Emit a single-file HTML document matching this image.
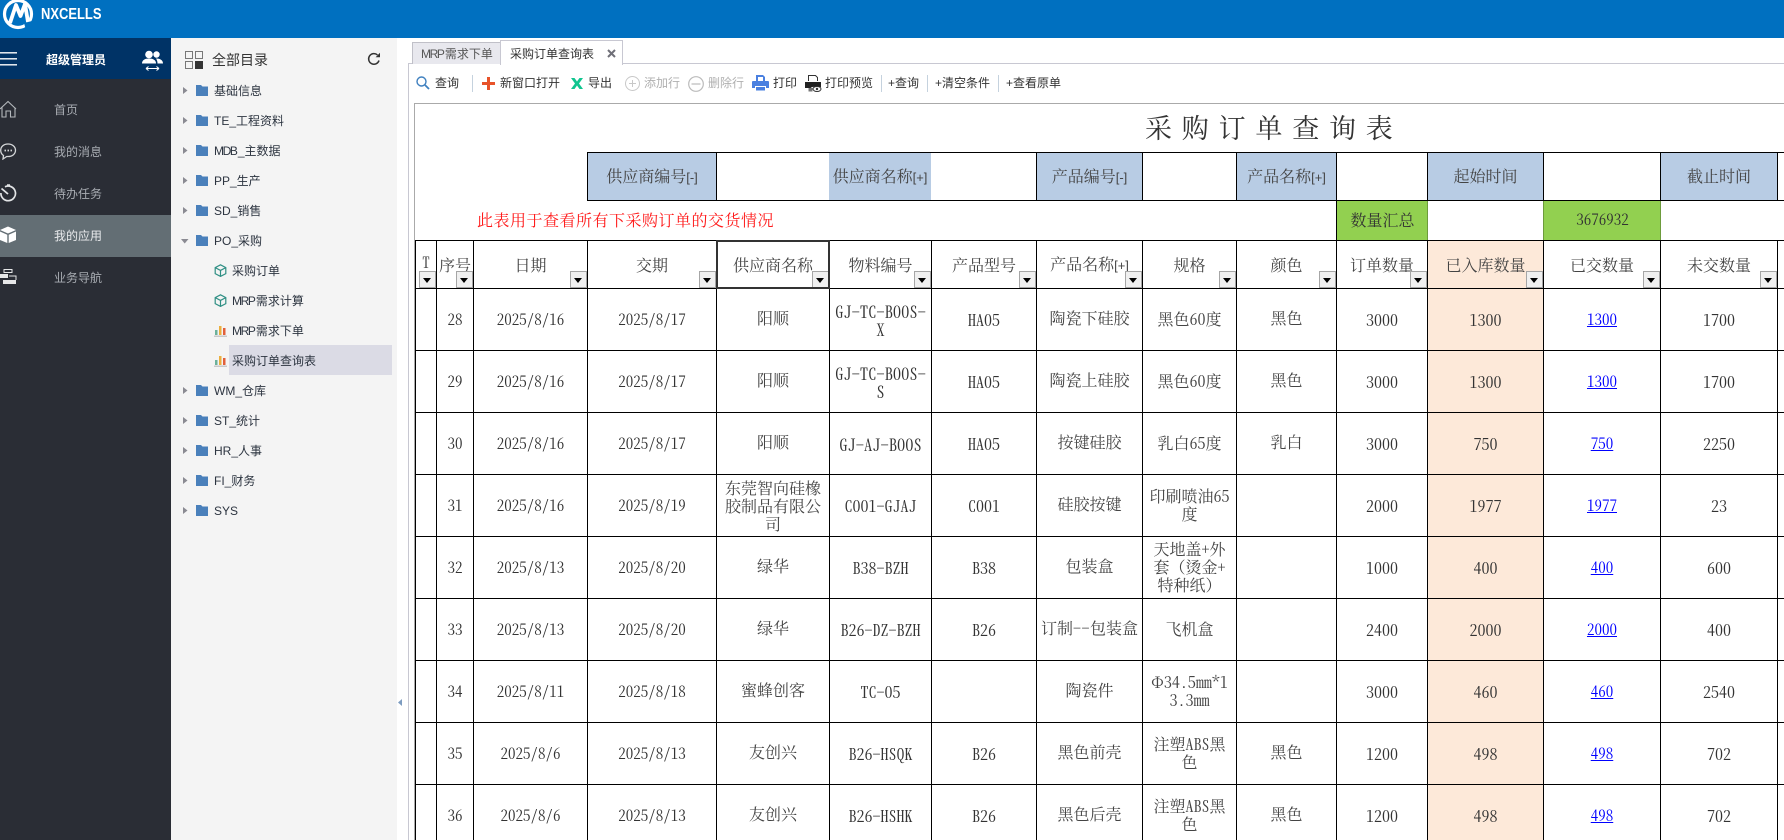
<!DOCTYPE html>
<html lang="zh-CN"><head><meta charset="utf-8"><title>采购订单查询表</title>
<style>
*{box-sizing:border-box}
html,body{margin:0;padding:0;width:1784px;height:840px;overflow:hidden;background:#fff}
body{position:relative;font-family:"Liberation Sans","Noto Sans CJK SC",sans-serif;font-size:12px;color:#333}
.abs{position:absolute}
.t{position:absolute;white-space:nowrap;line-height:16px}
#head{left:0;top:0;width:1784px;height:38px;background:#0070c0;overflow:hidden}
#navy{left:0;top:38px;width:171px;height:41px;background:#003366}
#side{left:0;top:79px;width:171px;height:761px;background:#2a2d35}
#act{left:0;top:215px;width:171px;height:42px;background:#636e74}
#tree{left:171px;top:38px;width:226px;height:802px;background:#f4f4f4}
.m{color:#a8acb2;left:54px}
.n{color:#2c3440;left:214px}
.l{color:#2c3440;left:232px}
.w{letter-spacing:-1.4px;margin-right:1.4px}
.tb{color:#333;top:75px}
.tb.o{color:#b0b0b0}
#sheet,#sheet td,#sheet th,.c{font-family:"Noto Serif CJK SC","Liberation Serif",serif;font-feature-settings:"hwid";color:#333}
table{position:absolute;left:415px;top:240px;table-layout:fixed;border-collapse:separate;border-spacing:0;width:1469px}
th,td{border-right:1px solid #000;border-bottom:1px solid #000;padding:0;text-align:center;vertical-align:middle;font-weight:400;font-size:16px;line-height:18px;white-space:nowrap;position:relative;overflow:hidden}
th{border-top:1px solid #000;height:49px}
th:first-child,td:first-child{border-left:1px solid #000}
td{height:62px}
td:nth-child(5),td:nth-child(8),td:nth-child(10){padding-bottom:3px}
td:nth-child(9){padding-bottom:2px}
#sheet td:nth-child(5),#sheet td:nth-child(8),#sheet td:nth-child(9),#sheet td:nth-child(10),#sheet th{color:#444}
.d{font-size:15px}
.p{background:#fde9d9}
.g{font-size:16.5px}
.z{font-feature-settings:normal}
td a{color:#0000ff;text-decoration:underline;font-size:15px}
.f{position:absolute;right:0;bottom:0;width:17px;height:17px;border:1px solid #a6a6a6;background:#f0f0f0}
.f:after{content:"";position:absolute;left:3px;top:6px;border-left:4.5px solid transparent;border-right:4.5px solid transparent;border-top:5px solid #000}
.h{position:absolute;top:152px;height:49px;border-top:1px solid #000;border-bottom:1px solid #000;text-align:center;line-height:46px;font-size:16px;white-space:nowrap;color:#444}
.b{background:#b8cce4}
.v{position:absolute;width:1px;background:#000}
.c{position:absolute;text-align:center;white-space:nowrap}
.s{font-size:13px;font-family:"Liberation Sans",sans-serif}
</style></head><body>

<div id="head" class="abs">
<svg class="abs" style="left:0;top:0" width="40" height="38" viewBox="0 0 40 38"><circle cx="18" cy="14" r="13.500" fill="none" stroke="#fff" stroke-width="3.200"/><path d="M10 23 L16 5 L20.500 16 L25 4 L28 22" fill="none" stroke="#fff" stroke-width="3.800" stroke-linejoin="round"/><path d="M24 23l8-2 1 8-7 1z" fill="#0070c0"/></svg>
<div class="t" style="left:41px;top:6px;font:700 16px/18px 'Liberation Sans',sans-serif;color:#fff;transform-origin:left;transform:scaleX(.81)">NXCELLS</div>
</div>
<div id="navy" class="abs"></div>
<div id="side" class="abs"></div>
<div id="act" class="abs"></div>

<svg class="abs" style="left:0;top:52px" width="18" height="14"><path d="M0 .8h17M0 6.800h17M0 12.800h17" stroke="#fff" stroke-width="1.400"/></svg>
<div class="t" style="left:46px;top:52px;color:#fff;font-weight:700">超级管理员</div>
<svg class="abs" style="left:141px;top:49px" width="23" height="23" viewBox="0 0 23 23" fill="#fff"><circle cx="8" cy="5.500" r="3.800"/><circle cx="15.500" cy="5.500" r="3.200"/><path d="M1 14.500c0-3.500 3-5 7-5s7 1.500 7 5z"/><path d="M15 9.500c4 0 7 1.500 7 5h-5.500c0-2-.5-3.500-1.500-5z"/><path d="M5 19.500h13M5 19.500l2.500-2M5 19.500l2.500 2M18 19.500l-2.500-2M18 19.500l-2.500 2" stroke="#fff" stroke-width="1.100" fill="none"/></svg>

<svg class="abs" style="left:0;top:100px" width="17" height="18" viewBox="0 0 17 18" fill="none" stroke="#b4b8bc" stroke-width="1.100"><path d="M0 9L8 1.500 16 9M2 7.500V17h4v-6h4.500v6H15V7.500"/></svg>
<svg class="abs" style="left:0;top:143px" width="17" height="17" viewBox="0 0 17 17" fill="none" stroke="#d4d6d8" stroke-width="1.300"><path d="M8 1C3.500 1 .7 3.800.7 7.300c0 2.500 1.200 4.200 2.800 5.200L3 16l3.700-2.500H8c4.500 0 7.500-2.700 7.500-6.200S12.500 1 8 1z"/><path d="M4.500 7.500h1.500M7.500 7.500H9M10.500 7.500H12" stroke-width="1.700"/></svg>
<svg class="abs" style="left:0;top:184px" width="17" height="18" viewBox="0 0 17 18" fill="none" stroke="#e2e4e6" stroke-width="1.700"><path d="M5 2.800A7.300 7.300 0 1 1 .9 9"/><path d="M1.500 4.500L8 10" stroke-width="1.800"/><path d="M7 1h3" stroke-width="1.500"/></svg>
<svg class="abs" style="left:0;top:226px" width="17" height="18" viewBox="0 0 17 18"><path d="M8 .5l8 3.500-8 3.500L0 4z" fill="#fff"/><path d="M0 5.500l7.300 3.200V17L0 14zM16 5.500L8.700 8.700V17l7.300-3z" fill="#fff"/></svg>
<svg class="abs" style="left:0;top:269px" width="17" height="16" viewBox="0 0 17 16" fill="#e6e7e8"><rect x="4" y=".5" width="8" height="3" fill="none" stroke="#e6e7e8"/><rect x="0" y="5" width="8" height="4"/><rect x="3" y="11" width="13" height="4"/><path d="M9 7h7V11" fill="none" stroke="#e6e7e8"/></svg>
<div class="t m" style="top:102px">首页</div>
<div class="t m" style="top:144px">我的消息</div>
<div class="t m" style="top:186px">待办任务</div>
<div class="t m" style="top:228px;color:#e8eaec">我的应用</div>
<div class="t m" style="top:270px">业务导航</div>

<div id="tree" class="abs"></div>
<svg class="abs" style="left:185px;top:51px" width="18" height="18" viewBox="0 0 18 18"><path d="M.5.500h7v7h-7zM10.500.5h7v7h-7zM.5 10.500h7v7h-7z" fill="none" stroke="#777"/><rect x="10" y="10" width="8" height="8" fill="#333"/></svg>
<div class="t" style="left:212px;top:52px;font-size:14px;color:#333">全部目录</div>
<svg class="abs" style="left:367px;top:52px" width="14" height="14" viewBox="0 0 14 14" fill="none" stroke="#333" stroke-width="1.500"><path d="M12 8.500A5.300 5.300 0 1 1 10.500 3"/><path d="M13 .8v4.400H8.600z" fill="#333" stroke="none"/></svg>

<svg width="0" height="0" style="position:absolute"><defs>
<symbol id="fo" viewBox="0 0 12 12"><path d="M0 1h5l1.500 1.500H12V12H0z" fill="#4a80bb"/></symbol>
<symbol id="ar" viewBox="0 0 5 7"><path d="M0 0l4.500 3.500L0 7z" fill="#8a8a92"/></symbol>
<symbol id="cu" viewBox="0 0 13 13"><path d="M6.500.8l5.300 2.800v6L6.500 12.400 1.200 9.600v-6zM1.200 3.600l5.300 2.800 5.300-2.800M6.500 6.400v6" fill="none" stroke="#2f8f84" stroke-width="1.200"/></symbol>
<symbol id="ba" viewBox="0 0 13 12"><rect x="1" y="5" width="2.500" height="5" fill="#6db19a"/><rect x="5" y="1" width="2.500" height="9" fill="#ebb03f"/><rect x="9" y="3" width="2.500" height="7" fill="#e2603a"/><rect x="0" y="10.500" width="13" height="1.500" fill="#c8c8c8"/></symbol>
</defs></svg>
<svg class="abs" style="left:183px;top:87px" width="5" height="7"><use href="#ar"/></svg>
<svg class="abs" style="left:183px;top:117px" width="5" height="7"><use href="#ar"/></svg>
<svg class="abs" style="left:183px;top:147px" width="5" height="7"><use href="#ar"/></svg>
<svg class="abs" style="left:183px;top:177px" width="5" height="7"><use href="#ar"/></svg>
<svg class="abs" style="left:183px;top:207px" width="5" height="7"><use href="#ar"/></svg>
<svg class="abs" style="left:181px;top:239px" width="8" height="5"><path d="M0 0h7.500L3.700 4.500z" fill="#8a8a92"/></svg>
<svg class="abs" style="left:183px;top:387px" width="5" height="7"><use href="#ar"/></svg>
<svg class="abs" style="left:183px;top:417px" width="5" height="7"><use href="#ar"/></svg>
<svg class="abs" style="left:183px;top:447px" width="5" height="7"><use href="#ar"/></svg>
<svg class="abs" style="left:183px;top:477px" width="5" height="7"><use href="#ar"/></svg>
<svg class="abs" style="left:183px;top:507px" width="5" height="7"><use href="#ar"/></svg>
<svg class="abs" style="left:196px;top:84px" width="12" height="12"><use href="#fo"/></svg>
<svg class="abs" style="left:196px;top:114px" width="12" height="12"><use href="#fo"/></svg>
<svg class="abs" style="left:196px;top:144px" width="12" height="12"><use href="#fo"/></svg>
<svg class="abs" style="left:196px;top:174px" width="12" height="12"><use href="#fo"/></svg>
<svg class="abs" style="left:196px;top:204px" width="12" height="12"><use href="#fo"/></svg>
<svg class="abs" style="left:196px;top:234px" width="12" height="12"><use href="#fo"/></svg>
<svg class="abs" style="left:196px;top:384px" width="12" height="12"><use href="#fo"/></svg>
<svg class="abs" style="left:196px;top:414px" width="12" height="12"><use href="#fo"/></svg>
<svg class="abs" style="left:196px;top:444px" width="12" height="12"><use href="#fo"/></svg>
<svg class="abs" style="left:196px;top:474px" width="12" height="12"><use href="#fo"/></svg>
<svg class="abs" style="left:196px;top:504px" width="12" height="12"><use href="#fo"/></svg>
<div class="t n" style="top:83px">基础信息</div>
<div class="t n" style="top:113px">TE_工程资料</div>
<div class="t n" style="top:143px"><span class="w">MDB</span>_主数据</div>
<div class="t n" style="top:173px">PP_生产</div>
<div class="t n" style="top:203px">SD_销售</div>
<div class="t n" style="top:233px">PO_采购</div>
<svg class="abs" style="left:214px;top:264px" width="13" height="13"><use href="#cu"/></svg>
<div class="t l" style="top:263px">采购订单</div>
<svg class="abs" style="left:214px;top:294px" width="13" height="13"><use href="#cu"/></svg>
<div class="t l" style="top:293px"><span class="w">MRP</span>需求计算</div>
<svg class="abs" style="left:214px;top:325px" width="13" height="12"><use href="#ba"/></svg>
<div class="t l" style="top:323px"><span class="w">MRP</span>需求下单</div>
<div class="abs" style="left:229px;top:345px;width:163px;height:30px;background:#dbdbe5"></div>
<svg class="abs" style="left:214px;top:355px" width="13" height="12"><use href="#ba"/></svg>
<div class="t l" style="top:353px">采购订单查询表</div>
<div class="t n" style="top:383px">WM_仓库</div>
<div class="t n" style="top:413px">ST_统计</div>
<div class="t n" style="top:443px">HR_人事</div>
<div class="t n" style="top:473px">FI_财务</div>
<div class="t n" style="top:503px">SYS</div>
<svg class="abs" style="left:398px;top:699px" width="4" height="7"><path d="M4 0v7L0 3.500z" fill="#7d9cc0"/></svg>

<!-- tabs -->
<div class="abs" style="left:408px;top:63px;width:1376px;height:777px;border-left:1px solid #c8c8d2;border-top:1px solid #c8c8d2"></div>
<div class="abs" style="left:412px;top:42px;width:89px;height:22px;background:#e8e8ee;border:1px solid #c0c0c8;border-bottom:0"></div>
<div class="t" style="left:421px;top:46px;color:#555"><span class="w">MRP</span>需求下单</div>
<div class="abs" style="left:500px;top:40px;width:123px;height:25px;background:#fff;border:1px solid #c8c8d2;border-bottom:0"></div>
<div class="t" style="left:510px;top:46px;color:#333">采购订单查询表</div>
<svg class="abs" style="left:607px;top:49px" width="9" height="9"><path d="M1 1l7 7M8 1l-7 7" stroke="#6f6f78" stroke-width="2"/></svg>

<!-- toolbar -->
<svg class="abs" style="left:416px;top:76px" width="14" height="14" viewBox="0 0 14 14" fill="none" stroke="#3f80bf" stroke-width="1.400"><circle cx="5.500" cy="5.500" r="4.500"/><path d="M9 9l4 4" stroke-width="1.800"/></svg>
<div class="t tb" style="left:435px">查询</div>
<div class="abs" style="left:472px;top:75px;width:1px;height:17px;background:#c5d2de"></div>
<svg class="abs" style="left:482px;top:77px" width="13" height="13"><path d="M5 0h3v5h5v3H8v5H5V8H0V5h5z" fill="#e8532a"/></svg>
<div class="t tb" style="left:500px">新窗口打开</div>
<svg class="abs" style="left:571px;top:78px" width="12" height="11"><path d="M0 0h3.500L6 3.500 8.500 0H12L8 5.500l4 5.500H8.500L6 7.500 3.500 11H0l4-5.500z" fill="#10c58f"/></svg>
<div class="t tb" style="left:588px">导出</div>
<svg class="abs" style="left:625px;top:76px" width="15" height="15" fill="none" stroke="#c8c8c8"><circle cx="7.500" cy="7.500" r="7"/><path d="M7.500 4v7M4 7.500h7"/></svg>
<div class="t tb o" style="left:644px">添加行</div>
<svg class="abs" style="left:688px;top:76px" width="16" height="16" fill="none" stroke="#bbb" stroke-width="1.200"><circle cx="8" cy="8" r="7.300"/><path d="M3.500 8h9"/></svg>
<div class="t tb o" style="left:708px">删除行</div>
<svg class="abs" style="left:752px;top:75px" width="17" height="16" viewBox="0 0 17 16" fill="#4a80e0"><path d="M4 0h7l2 2v4h-2V2H6v4H4z"/><path d="M1 6h15a1 1 0 0 1 1 1v6h-3v-2H3v2H0V7a1 1 0 0 1 1-1z"/><rect x="4" y="12" width="9" height="3.500"/></svg>
<div class="t tb" style="left:773px">打印</div>
<svg class="abs" style="left:805px;top:75px" width="17" height="17" viewBox="0 0 17 17"><path d="M3.500 6V.5h7l2 2V6" fill="none" stroke="#333"/><path d="M0 7h16v5H9.500a4 4 0 0 0-5 3H4v-2H0z" fill="#222"/><ellipse cx="12" cy="14" rx="4" ry="2.500" fill="#fff" stroke="#333"/><circle cx="12" cy="14" r="1.200" fill="#333"/><rect x="3.500" y="13" width="4" height="3.500" fill="#777"/></svg>
<div class="t tb" style="left:825px">打印预览</div>
<div class="abs" style="left:881px;top:75px;width:1px;height:17px;background:#c5d2de"></div>
<div class="t tb" style="left:888px">+查询</div>
<div class="abs" style="left:927px;top:75px;width:1px;height:17px;background:#c5d2de"></div>
<div class="t tb" style="left:935px">+清空条件</div>
<div class="abs" style="left:998px;top:75px;width:1px;height:17px;background:#c5d2de"></div>
<div class="t tb" style="left:1006px">+查看原单</div>

<!-- sheet -->
<div class="abs" style="left:414px;top:103px;width:1370px;height:737px;border-left:1px solid #aaa;border-top:1px solid #aaa"></div>
<div id="sheet">
<div class="c" style="left:1145px;top:108px;font-size:27px;line-height:38px;letter-spacing:9.800px">采购订单查询表</div>

<div class="h b" style="left:587px;width:130px;border-left:1px solid #000;border-right:1px solid #000">供应商编号<span class="s">[-]</span></div>
<div class="h" style="left:717px;width:112px"></div>
<div class="h b" style="left:829px;width:102px">供应商名称<span class="s">[+]</span></div>
<div class="h" style="left:931px;width:106px;border-right:1px solid #000"></div>
<div class="h b" style="left:1037px;width:106px;border-right:1px solid #000">产品编号<span class="s">[-]</span></div>
<div class="h" style="left:1143px;width:94px;border-right:1px solid #000"></div>
<div class="h b" style="left:1237px;width:100px;border-right:1px solid #000">产品名称<span class="s">[+]</span></div>
<div class="h" style="left:1337px;width:91px;border-right:1px solid #000"></div>
<div class="h b" style="left:1428px;width:116px;border-right:1px solid #000">起始时间</div>
<div class="h" style="left:1544px;width:117px;border-right:1px solid #000"></div>
<div class="h b" style="left:1661px;width:117px;border-right:1px solid #000">截止时间</div>
<div class="h" style="left:1778px;width:6px"></div>

<div class="c" style="left:477px;top:209px;font-size:16px;line-height:22px;letter-spacing:.5px;color:#ff1a1a">此表用于查看所有下采购订单的交货情况</div>
<div class="c" style="left:1337px;top:201px;width:91px;height:39px;background:#92d050;line-height:37px;font-size:16px">数量汇总</div>
<div class="c" style="left:1544px;top:201px;width:117px;height:39px;background:#92d050;line-height:37px;font-size:15px">3676932</div>
<div class="v" style="left:1336px;top:201px;height:39px"></div>
<div class="v" style="left:1427px;top:201px;height:39px;background:#6d9b3c"></div>
<div class="v" style="left:1543px;top:201px;height:39px;background:#6d9b3c"></div>
<div class="v" style="left:1660px;top:201px;height:39px;background:#6d9b3c"></div>

<table>
<colgroup><col style="width:22px"><col style="width:37px"><col style="width:114px"><col style="width:129px"><col style="width:113px"><col style="width:102px"><col style="width:105px"><col style="width:106px"><col style="width:94px"><col style="width:100px"><col style="width:91px"><col style="width:116px"><col style="width:117px"><col style="width:117px"><col style="width:106px"></colgroup>
<tr><th style="font-size:15px;padding-bottom:4px">T<i class="f"></i></th><th>序号<i class="f"></i></th><th>日期<i class="f"></i></th><th>交期<i class="f"></i></th><th>供应商名称<i class="f"></i></th><th>物料编号<i class="f"></i></th><th>产品型号<i class="f"></i></th><th>产品名称<span class="s">[+]</span><i class="f"></i></th><th>规格<i class="f"></i></th><th>颜色<i class="f"></i></th><th>订单数量<i class="f"></i></th><th class="p">已入库数量<i class="f"></i></th><th>已交数量<i class="f"></i></th><th>未交数量<i class="f"></i></th><th><i class="f"></i></th></tr>
<tr><td></td><td class="d">28</td><td class="d">2025/8/16</td><td class="d">2025/8/17</td><td>阳顺</td><td class="g">GJ-TC-B00S-<br>X</td><td>HA05</td><td>陶瓷下硅胶</td><td>黑色60度</td><td>黑色</td><td>3000</td><td class="p">1300</td><td><a>1300</a></td><td>1700</td><td></td></tr>
<tr><td></td><td class="d">29</td><td class="d">2025/8/16</td><td class="d">2025/8/17</td><td>阳顺</td><td class="g">GJ-TC-B00S-<br>S</td><td>HA05</td><td>陶瓷上硅胶</td><td>黑色60度</td><td>黑色</td><td>3000</td><td class="p">1300</td><td><a>1300</a></td><td>1700</td><td></td></tr>
<tr><td></td><td class="d">30</td><td class="d">2025/8/16</td><td class="d">2025/8/17</td><td>阳顺</td><td class="g">GJ-AJ-B00S</td><td>HA05</td><td>按键硅胶</td><td>乳白65度</td><td>乳白</td><td>3000</td><td class="p">750</td><td><a>750</a></td><td>2250</td><td></td></tr>
<tr><td></td><td class="d">31</td><td class="d">2025/8/16</td><td class="d">2025/8/19</td><td style="padding-bottom:0">东莞智向硅橡<br>胶制品有限公<br>司</td><td>C001-GJAJ</td><td>C001</td><td>硅胶按键</td><td>印刷喷油65<br>度</td><td></td><td>2000</td><td class="p">1977</td><td><a>1977</a></td><td>23</td><td></td></tr>
<tr><td></td><td class="d">32</td><td class="d">2025/8/13</td><td class="d">2025/8/20</td><td>绿华</td><td>B38-BZH</td><td>B38</td><td>包装盒</td><td>天地盖+外<br>套<span class="z">（</span>烫金+<br>特种纸<span class="z">）</span></td><td></td><td>1000</td><td class="p">400</td><td><a>400</a></td><td>600</td><td></td></tr>
<tr><td></td><td class="d">33</td><td class="d">2025/8/13</td><td class="d">2025/8/20</td><td>绿华</td><td>B26-DZ-BZH</td><td>B26</td><td>订制<span style="letter-spacing:.5px">--</span>包装盒</td><td>飞机盒</td><td></td><td>2400</td><td class="p">2000</td><td><a>2000</a></td><td>400</td><td></td></tr>
<tr><td></td><td class="d">34</td><td class="d">2025/8/11</td><td class="d">2025/8/18</td><td>蜜蜂创客</td><td>TC-05</td><td></td><td>陶瓷件</td><td>Φ34.5mm*1<br>3.3mm</td><td></td><td>3000</td><td class="p">460</td><td><a>460</a></td><td>2540</td><td></td></tr>
<tr><td></td><td class="d">35</td><td class="d">2025/8/6</td><td class="d">2025/8/13</td><td>友创兴</td><td>B26-HSQK</td><td>B26</td><td>黑色前壳</td><td>注塑ABS黑<br>色</td><td>黑色</td><td>1200</td><td class="p">498</td><td><a>498</a></td><td>702</td><td></td></tr>
<tr><td></td><td class="d">36</td><td class="d">2025/8/6</td><td class="d">2025/8/13</td><td>友创兴</td><td>B26-HSHK</td><td>B26</td><td>黑色后壳</td><td>注塑ABS黑<br>色</td><td>黑色</td><td>1200</td><td class="p">498</td><td><a>498</a></td><td>702</td><td></td></tr>
</table>
<div class="abs" style="left:716px;top:240px;width:114px;height:49px;border:2px solid #333"></div>
</div>
</body></html>
